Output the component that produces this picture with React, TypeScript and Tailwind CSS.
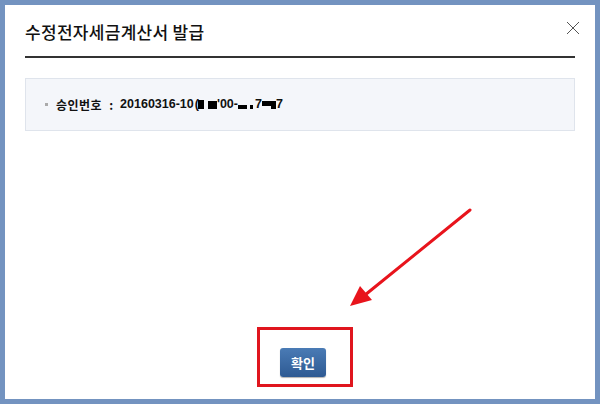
import React from 'react';

const FONT = { fontFamily: '"Noto Sans CJK KR", "Noto Sans", sans-serif' };

function Redact({ w, h, className = '' }: { w: string; h: string; className?: string }) {
  return <span className={`inline-block bg-black align-middle ${w} ${h} ${className}`} />;
}

export default function App() {
  return (
    <div className="w-[600px] h-[404px] bg-[#7393c0] p-[5px]" style={FONT}>
      <div className="relative w-full h-full bg-white flex flex-col px-[20px]">
        <button className="absolute right-[15px] top-[16px] w-[14px] h-[14px] text-[#555]" title="닫기">
          <svg viewBox="0 0 14 14" className="w-full h-full" fill="none" stroke="currentColor" strokeWidth="1">
            <path d="M1 1 L13 13 M13 1 L1 13" />
          </svg>
        </button>

        <h1 className="pt-[15px] h-[39px] text-[17px] leading-[24px] font-medium text-[#111] tracking-[0.3px]">
          수정전자세금계산서 발급
        </h1>
        <div className="mt-[12px] h-[2px] bg-[#333]" />

        <div className="mt-[20px] h-[53px] bg-[#f4f6fa] border border-[#dfe4ec] flex items-center pl-[19px]">
          <span className="w-[3px] h-[3px] bg-[#aaa] mr-[8px]" />
          <span className="text-[12px] font-bold text-[#111] flex items-center">
            <span className="tracking-[0.5px]">승인번호</span>
            <span className="mx-[7px]">:</span>
            <span style={{ fontFamily: '"Liberation Sans", Arial, sans-serif' }} className="flex items-center text-[12.5px]">
              20160316-10
              <span className="ml-[1px]">(</span>
              <Redact w="w-[6px]" h="h-[9px]" className="ml-[-1px]" />
              <Redact w="w-[9px]" h="h-[8px]" className="ml-[4px]" />
              <span>'00-</span>
              <Redact w="w-[9px]" h="h-[4px]" className="mt-[5px]" />
              <Redact w="w-[3px]" h="h-[4px]" className="ml-[3px] mt-[5px]" />
              <span className="ml-[2px]">7</span>
              <Redact w="w-[9px]" h="h-[5px]" className="mb-[3px]" />
              <Redact w="w-[5px]" h="h-[8px]" />
              <span>7</span>
            </span>
          </span>
        </div>

        <div className="flex-1" />

        <div className="flex justify-center pb-[22px]">
          <button className="relative ml-[6px] w-[46px] h-[29px] rounded-[3px] bg-gradient-to-b from-[#4a7bb5] to-[#2e5a93] text-white text-[13px] font-bold shadow-[0_1px_1px_rgba(0,0,0,0.3)]">
            확인
            <span className="absolute left-[-23px] top-[-21px] w-[96px] h-[60px] border-[3px] border-[#e0161e]" />
          </button>
        </div>

        <svg className="absolute left-[335px] top-[195px] w-[140px] h-[115px]" viewBox="0 0 140 115" fill="none">
          <path d="M130 10 L25 95" stroke="#e8141c" strokeWidth="3" strokeLinecap="round" />
          <path d="M10 106 L20 86 L32 100 Z" fill="#e8141c" />
        </svg>
      </div>
    </div>
  );
}
